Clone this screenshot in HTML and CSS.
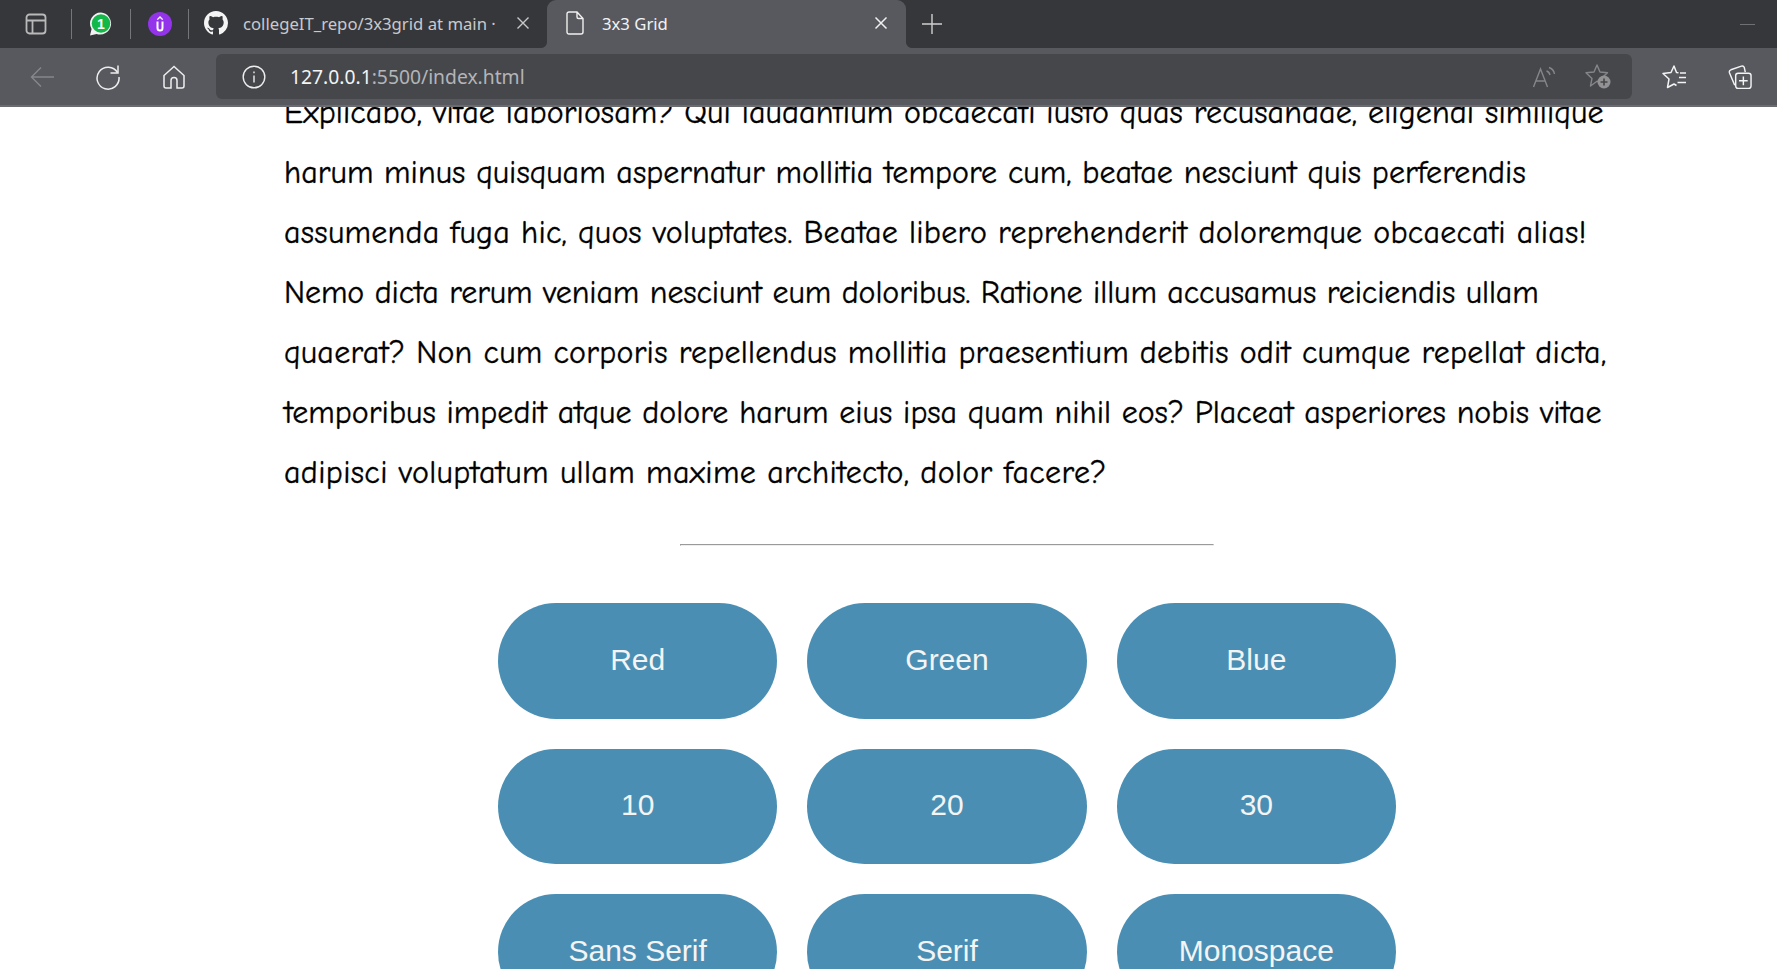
FILE: index.html
```html
<!DOCTYPE html>
<html lang="en">
<head>
<meta charset="utf-8">
<title>3x3 Grid</title>
<link rel="stylesheet" href="styles.css">
</head>
<body>
<header class="chrome">
  <div class="tabstrip">
    <div class="strip-icon strip-first"><svg width="22" height="22" viewBox="0 0 22 22" fill="none" stroke="#b9b9ba" stroke-width="1.8"><rect x="1.500" y="1.500" width="19" height="19" rx="3"/><path d="M2 7.500H20M7.500 7.500V20"/></svg></div>
    <span class="sep"></span>
    <div class="strip-icon"><svg width="26" height="26" viewBox="0 0 26 26"><path d="M13 1.500a11 11 0 0 0-9.400 16.600L2 24.500l6.600-1.600A11 11 0 1 0 13 1.500z" fill="#f2f2f2"/><circle cx="13" cy="12.500" r="9.300" fill="#12b84a"/><text x="13" y="17.500" class="wa-num">1</text></svg></div>
    <span class="sep"></span>
    <div class="strip-icon strip-narrow"><svg width="24" height="24" viewBox="0 0 24 24"><circle cx="12" cy="12" r="12" fill="#9333ea"/><path d="M8.500 9.500v6.500a3.500 3.500 0 0 0 7 0V9.500h-2v6.500a1.500 1.500 0 0 1-3 0V9.500z" fill="#fff"/><path d="M12 4l3.200 3.200-1 .8L12 6l-2.200 2-1-.8z" fill="#fff"/></svg></div>
    <span class="sep"></span>
    <div class="tab">
      <svg class="gh" width="24" height="24" viewBox="0 0 16 16" fill="#f4f4f4"><path d="M8 0C3.580 0 0 3.580 0 8c0 3.540 2.290 6.530 5.470 7.590.4.070.55-.17.55-.38 0-.19-.01-.82-.01-1.490-2.010.37-2.530-.49-2.690-.94-.09-.23-.48-.94-.82-1.130-.28-.15-.68-.52-.01-.53.63-.01 1.080.58 1.230.82.72 1.210 1.870.87 2.330.66.07-.52.28-.87.51-1.070-1.780-.2-3.640-.89-3.640-3.950 0-.87.31-1.590.82-2.150-.08-.2-.36-1.020.08-2.120 0 0 .67-.21 2.200.82.64-.18 1.320-.27 2-.27s1.360.09 2 .27c1.530-1.040 2.200-.82 2.200-.82.44 1.100.16 1.920.08 2.120.51.56.82 1.270.82 2.150 0 3.070-1.870 3.750-3.650 3.950.29.25.54.73.54 1.480 0 1.070-.01 1.930-.01 2.200 0 .21.15.46.55.38A8.010 8.010 0 0 0 16 8c0-4.420-3.580-8-8-8z"/></svg>
      <span class="tab-title">collegeIT_repo/3x3grid at main ·</span>
      <svg class="tab-x" width="14" height="14" viewBox="0 0 14 14" stroke="#c8c8c8" stroke-width="1.400"><path d="M1.500 1.500l11 11M12.500 1.500l-11 11"/></svg>
    </div>
    <div class="tab tab-active">
      <svg class="doc" width="18" height="24" viewBox="0 0 18 24" fill="none" stroke="#f0f0f0" stroke-width="1.400"><path d="M3 1h8l6 6.500V21a2 2 0 0 1-2 2H3a2 2 0 0 1-2-2V3a2 2 0 0 1 2-2zM11 1v5a1.500 1.500 0 0 0 1.500 1.500H17"/></svg>
      <span class="tab-title">3x3 Grid</span>
      <svg class="tab-x" width="14" height="14" viewBox="0 0 14 14" stroke="#f0f0f0" stroke-width="1.500"><path d="M1.500 1.500l11 11M12.500 1.500l-11 11"/></svg>
    </div>
    <svg class="plus" width="22" height="22" viewBox="0 0 22 22" stroke="#cfcfcf" stroke-width="1.400"><path d="M11 1v20M1 11h20"/></svg>
    <span class="min"></span>
  </div>
  <div class="toolbar">
    <div class="cell"><svg width="24" height="22" viewBox="0 0 24 22" fill="none" stroke="#85878b" stroke-width="1.400"><path d="M24 11H1.500M11 1.500l-9.500 9.500 9.500 9.500"/></svg></div>
    <div class="cell"><svg width="26" height="26" viewBox="0 0 26 26" fill="none" stroke="#eeeeee" stroke-width="1.500"><path d="M22.500 8.500A11 11 0 1 0 24 13"/><path d="M23 1.500V9H15.500"/></svg></div>
    <div class="cell"><svg width="24" height="24" viewBox="0 0 24 24" fill="none" stroke="#eeeeee" stroke-width="1.500"><path d="M12 1.500L2 10.500V21a2 2 0 0 0 2 2H9v-7.500a3 3 0 0 1 6 0V23h5a2 2 0 0 0 2-2V10.500z"/></svg></div>
    <div class="address">
      <svg class="info" width="24" height="24" viewBox="0 0 24 24" fill="none" stroke="#eeeeee" stroke-width="1.400"><circle cx="12" cy="12" r="10.800"/><path d="M12 10.500v7M12 6.500v1.800"/></svg>
      <span class="url"><b>127.0.0.1</b>:5500/index.html</span>
      <span class="spacer"></span>
      <div class="addr-cell"><svg width="24" height="22" viewBox="0 0 24 22" fill="none" stroke="#858689" stroke-width="1.400"><path d="M1.500 21L8.500 3l7 18M4 15h9.500M14.500 5c2 .5 3 2 3.500 4M17 1.500c3 1 5 3.500 5.500 6.500"/></svg></div>
      <div class="addr-cell"><svg width="26" height="25" viewBox="0 0 26 25" fill="none" stroke="#858689" stroke-width="1.400" stroke-linejoin="round"><path d="M12 1l3 7 7.500.8-5.500 5 1.500 7.200-6.500-3.800L5.500 22l1.500-7.600L1 8.800 9 8z"/><circle cx="19" cy="18" r="6.500" fill="#929294" stroke="none"/><path d="M19 14.500v7M15.500 18h7" stroke="#46474a" stroke-width="1.600"/></svg></div>
    </div>
    <div class="cell cell-first"><svg width="24" height="24" viewBox="0 0 24 24" fill="none" stroke="#f4f4f4" stroke-width="1.500" stroke-linejoin="round"><path d="M16.500 7.700L14.500 7.500 12 1 9 7.500 1 8.500 7 14 5.500 22.500 12 19 14.500 20.500M18 8H24M17 12.500H24M15.500 17.500H24"/></svg></div>
    <div class="cell"><svg width="24" height="24" viewBox="0 0 25 25" fill="none" stroke="#f4f4f4" stroke-width="1.500"><path d="M7 21L1.500 8a2.500 2.500 0 0 1 1.500-3L14 1.200a2.500 2.500 0 0 1 3 1.500L18 7.500"/><rect x="8" y="8.500" width="16" height="16" rx="2.500"/><path d="M16 12v9M11.500 16.500h9"/></svg></div>
  </div>
</header>
<div class="viewport">
  <main class="page">
    <p class="prose">
      <span class="line line-1">Explicabo, vitae laboriosam? Qui laudantium obcaecati iusto quas recusandae, eligendi similique</span>
      <span class="line">harum minus quisquam aspernatur mollitia tempore cum, beatae nesciunt quis perferendis</span>
      <span class="line line-3">assumenda fuga hic, quos voluptates. Beatae libero reprehenderit doloremque obcaecati alias!</span>
      <span class="line line-4">Nemo dicta rerum veniam nesciunt eum doloribus. Ratione illum accusamus reiciendis ullam</span>
      <span class="line line-5">quaerat? Non cum corporis repellendus mollitia praesentium debitis odit cumque repellat dicta,</span>
      <span class="line">temporibus impedit atque dolore harum eius ipsa quam nihil eos? Placeat asperiores nobis vitae</span>
      <span class="line line-7">adipisci voluptatum ullam maxime architecto, dolor facere?</span>
    </p>
    <hr class="rule">
    <div class="grid">
      <button class="pill">Red</button>
      <button class="pill">Green</button>
      <button class="pill">Blue</button>
      <button class="pill">10</button>
      <button class="pill">20</button>
      <button class="pill">30</button>
      <button class="pill">Sans Serif</button>
      <button class="pill">Serif</button>
      <button class="pill">Monospace</button>
    </div>
  </main>
</div>
</body>
</html>
```
FILE: styles.css
```css
* { box-sizing: border-box; }
html, body { margin: 0; height: 100%; }
body { overflow: hidden; background: #fff; display: flex; flex-direction: column; font-family: "Liberation Sans", Arial, sans-serif; }

.chrome { flex: none; position: relative; z-index: 1; height: 107px; background: #58595e; border-bottom: 2px solid #6a6b6f; font-family: "Noto Sans", "Open Sans", sans-serif; }
.tabstrip { height: 48px; background: #36373b; display: flex; align-items: center; color: #fff; }
.strip-icon { width: 58px; display: flex; justify-content: center; align-items: center; }
.strip-first { width: 71px; }
.strip-narrow { width: 57px; }
.strip-icon svg { display: block; }
.wa-num { fill: #fff; font-family: "Liberation Sans", sans-serif; font-size: 14px; font-weight: 700; text-anchor: middle; }
.sep { width: 1px; height: 30px; background: #75767a; }
.tab { flex: none; width: 358px; height: 48px; display: flex; align-items: center; padding: 0 17px 2px 15px; gap: 15px; color: #c9cacc; font-size: 16.700px; border-radius: 9px 9px 0 0; }
.tab-title { flex: 1; white-space: nowrap; overflow: hidden; }
.tab-active { position: relative; width: 359px; background: #58595e; color: #f2f2f2; padding: 0 18px 2px 19px; gap: 18px; }
.tab-active::before, .tab-active::after { content: ""; position: absolute; bottom: 0; width: 6px; height: 6px; }
.tab-active::before { left: -6px; background: radial-gradient(circle at 0 0, #36373b 5.500px, #58595e 6.500px); }
.tab-active::after { right: -6px; background: radial-gradient(circle at 100% 0, #36373b 5.500px, #58595e 6.500px); }
.gh, .doc, .tab-x { flex: none; }
.plus { margin-left: 15px; }
.min { width: 15px; height: 1px; background: #6f7074; margin-left: auto; margin-right: 22px; }

.toolbar { height: 57px; display: flex; align-items: center; padding: 6px 0 6px 9px; }
.cell { flex: none; width: 66px; display: flex; justify-content: center; align-items: center; }
.address { flex: none; margin-left: 9px; width: 1416px; height: 45px; background: #46474b; border-radius: 6px; display: flex; align-items: center; padding: 0 7px 0 26px; gap: 24px; font-size: 19.300px; color: #b4b5b8; }
.info { flex: none; }
.url { white-space: nowrap; }
.url b { font-weight: 400; color: #f4f4f4; }
.spacer { flex: 1; }
.addr-cell { flex: none; width: 54px; margin-left: -24px; display: flex; justify-content: center; }
.addr-cell:nth-of-type(1) { margin-left: 0; }
.cell-first { margin-left: 9px; }

.viewport { flex: 1; min-height: 0; overflow: hidden; }
.page { margin-top: -24px; padding: 0 167px 0 284px; }
.prose { margin: 0; font-family: "Comic Sans MS", "Comic Neue", cursive; font-size: 32px; line-height: 60px; color: #000; letter-spacing: .04px; -webkit-text-stroke: .35px #000; }
.line { display: block; white-space: nowrap; }
.line-1 { letter-spacing: .12px; }
.line-3 { letter-spacing: .25px; }
.line-4 { letter-spacing: -.09px; }
.line-5 { letter-spacing: .25px; }
.line-7 { letter-spacing: .36px; }
.rule { width: 534px; height: 2px; margin: 41px auto 0; border-style: solid; border-width: 1px; border-color: #9a9a9a #eeeeee #eeeeee #9a9a9a; }
.grid { width: 898px; margin: 57px auto 0; display: grid; grid-template-columns: repeat(3, 1fr); grid-auto-rows: 115.500px; gap: 30px; }
.pill { border: 0; border-radius: 58px; background: #4a8fb3; color: #f4f4f4; font-family: "Liberation Sans", Arial, sans-serif; font-size: 30px; padding: 0 0 2px; }
```
